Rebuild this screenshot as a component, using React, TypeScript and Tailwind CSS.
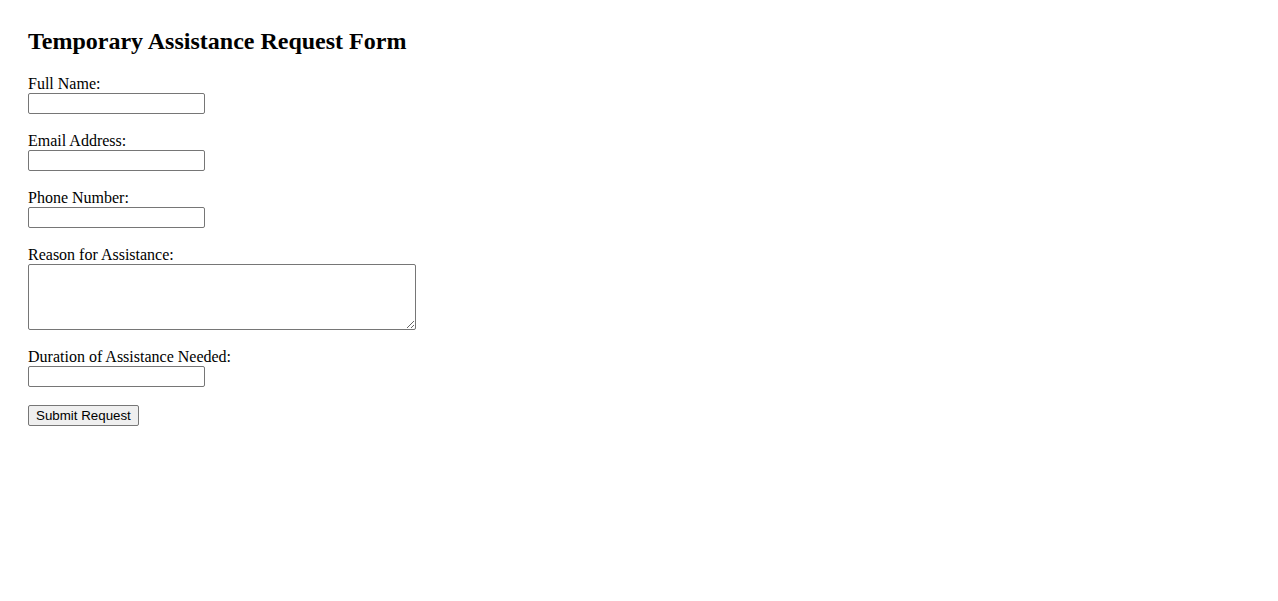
const fields = [
  { id: "fullName", label: "Full Name:", type: "text" },
  { id: "email", label: "Email Address:", type: "email" },
  { id: "phone", label: "Phone Number:", type: "tel" },
];

export default function App() {
  return (
    <div className="min-h-screen bg-white p-7 font-['Liberation_Serif',serif] text-black">
      <h2 className="mb-5 text-[24px] font-bold leading-[27px]">
        Temporary Assistance Request Form
      </h2>

      <form className="flex flex-col items-start" onSubmit={(e) => e.preventDefault()}>
        {fields.map((f) => (
          <div key={f.id} className="mb-[18px] flex flex-col items-start">
            <label htmlFor={f.id} className="text-[16px] leading-[18px]">
              {f.label}
            </label>
            <input
              id={f.id}
              type={f.type}
              className="h-[21px] w-[177px] rounded-[2px] border border-[#767676] bg-white px-[2px] text-[13.33px]"
            />
          </div>
        ))}

        <div className="mb-[18px] flex flex-col items-start">
          <label htmlFor="reason" className="text-[16px] leading-[18px]">
            Reason for Assistance:
          </label>
          <textarea
            id="reason"
            className="block h-[66px] w-[388px] resize rounded-[2px] border border-[#767676] bg-white p-[2px] text-[13.33px]"
          />
        </div>

        <div className="mb-[18px] flex flex-col items-start">
          <label htmlFor="duration" className="text-[16px] leading-[18px]">
            Duration of Assistance Needed:
          </label>
          <input
            id="duration"
            type="text"
            className="h-[21px] w-[177px] rounded-[2px] border border-[#767676] bg-white px-[2px] text-[13.33px]"
          />
        </div>

        <button
          type="submit"
          className="h-[21px] rounded-[2px] border border-[#767676] bg-[#efefef] px-[7px] font-['Liberation_Sans',Arial,sans-serif] text-[13.33px] leading-[17px] text-black"
        >
          Submit Request
        </button>
      </form>
    </div>
  );
}
